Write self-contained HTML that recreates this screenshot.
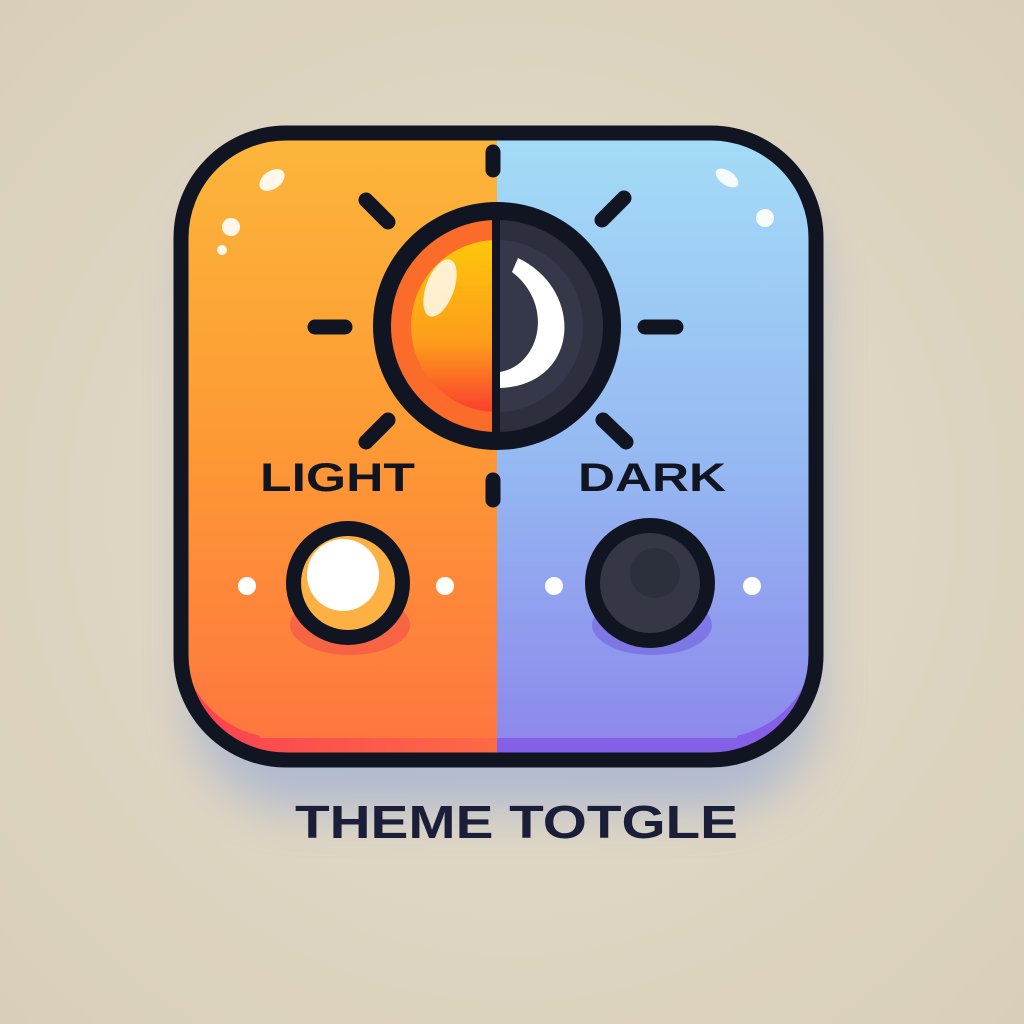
<!DOCTYPE html>
<html><head><style>html,body{margin:0;padding:0;background:#ddd3c1;}svg{display:block}</style></head>
<body>
<svg width="1024" height="1024" viewBox="0 0 1024 1024" xmlns="http://www.w3.org/2000/svg">
<defs>
<radialGradient id="bg" cx="50%" cy="50%" r="70%"><stop offset="0" stop-color="#e3dccd"/><stop offset="1" stop-color="#d9cfb9"/></radialGradient>
<linearGradient id="lg" x1="0" y1="0" x2="0" y2="1"><stop offset="0" stop-color="#fcb63a"/><stop offset="0.5" stop-color="#fd9a34"/><stop offset="1" stop-color="#fe7740"/></linearGradient>
<linearGradient id="rg" x1="0" y1="0" x2="0" y2="1"><stop offset="0" stop-color="#a4dcf7"/><stop offset="0.55" stop-color="#95b8f2"/><stop offset="1" stop-color="#8d89ec"/></linearGradient>
<linearGradient id="ll" x1="0" y1="0" x2="1" y2="0"><stop offset="0" stop-color="#fb3f52"/><stop offset="1" stop-color="#fc6a45"/></linearGradient>
<linearGradient id="kl" x1="0" y1="0" x2="0" y2="1"><stop offset="0" stop-color="#ffc60a"/><stop offset="0.6" stop-color="#fd9c1c"/><stop offset="1" stop-color="#fa3f2e"/></linearGradient>
<filter id="sh" x="-30%" y="-30%" width="160%" height="160%"><feGaussianBlur stdDeviation="22"/></filter>
<clipPath id="box"><rect x="181" y="133" width="635" height="627" rx="105"/></clipPath>
</defs>
<rect width="1024" height="1024" fill="url(#bg)"/>
<rect x="190" y="170" width="630" height="640" rx="110" fill="#8ea4d8" opacity="0.55" filter="url(#sh)"/>
<g clip-path="url(#box)">
<rect x="170" y="120" width="327" height="660" fill="url(#ll)"/>
<rect x="497" y="120" width="330" height="660" fill="#8360e6"/>
<rect x="181" y="133" width="316" height="605" rx="100" fill="url(#lg)"/>
<rect x="260" y="133" width="237" height="605" fill="url(#lg)"/>
<rect x="497" y="133" width="319" height="605" rx="100" fill="url(#rg)"/>
<rect x="497" y="133" width="240" height="605" fill="url(#rg)"/>
</g>
<rect x="181" y="133" width="635" height="627" rx="105" fill="none" stroke="#111522" stroke-width="15"/>
<ellipse cx="272" cy="180" rx="14" ry="9" fill="#fff" opacity="0.9" transform="rotate(-35 272 180)"/>
<circle cx="231" cy="227" r="9" fill="#fff" opacity="0.9"/>
<circle cx="222" cy="250" r="5" fill="#fff" opacity="0.9"/>
<ellipse cx="727" cy="178" rx="13" ry="7" fill="#fff" opacity="0.9" transform="rotate(35 727 178)"/>
<circle cx="765" cy="218" r="9" fill="#fff" opacity="0.9"/>
<g stroke="#111522" stroke-width="15" stroke-linecap="round">
<line x1="493" y1="152" x2="493" y2="170"/>
<line x1="493" y1="480" x2="493" y2="500"/>
<line x1="315" y1="327" x2="345" y2="327"/>
<line x1="645" y1="327" x2="676" y2="327"/>
<line x1="366" y1="200" x2="388" y2="222"/>
<line x1="624" y1="198" x2="602" y2="220"/>
<line x1="388" y1="420" x2="366" y2="442"/>
<line x1="603" y1="420" x2="626" y2="442"/>
</g>
<circle cx="497" cy="326" r="124" fill="#111522"/>
<path d="M497 220 A106 106 0 0 0 497 432 Z" fill="#fb6b2a"/>
<path d="M497 220 A106 106 0 0 1 497 432 Z" fill="#2d2f3f"/>
<path d="M497 240 A86 86 0 0 0 497 412 Z" fill="url(#kl)"/>
<path d="M497 240 A86 86 0 0 1 497 412 Z" fill="#353849"/>
<rect x="492" y="220" width="8" height="212" fill="#111522"/>
<ellipse cx="440" cy="288" rx="14" ry="30" fill="#fff" opacity="0.8" transform="rotate(20 440 288)"/>
<path d="M518 258 C 585 290, 580 385, 500 388 L 500 372 C 540 365, 555 305, 512 272 Z" fill="#fff"/>
<g font-family="Liberation Sans, sans-serif" font-weight="bold" fill="#111522">
<text x="260" y="491" font-size="40" textLength="155" lengthAdjust="spacingAndGlyphs">LIGHT</text>
<text x="578" y="491" font-size="40" textLength="148" lengthAdjust="spacingAndGlyphs">DARK</text>
<text x="295" y="838" font-size="46" fill="#1a1e38" textLength="443" lengthAdjust="spacingAndGlyphs">THEME TOTGLE</text>
</g>
<ellipse cx="350" cy="625" rx="60" ry="30" fill="#f0504a" opacity="0.6"/>
<circle cx="348" cy="583" r="62" fill="#111522"/>
<circle cx="348" cy="583" r="47" fill="#fdb043"/>
<circle cx="343" cy="575" r="36" fill="#fff"/>
<ellipse cx="652" cy="625" rx="60" ry="30" fill="#7260e0" opacity="0.6"/>
<circle cx="650" cy="583" r="65" fill="#111522"/>
<circle cx="650" cy="583" r="50" fill="#353746"/>
<circle cx="655" cy="573" r="25" fill="#2b2d3a" opacity="0.8"/>
<g fill="#fff"><circle cx="247" cy="586" r="9"/><circle cx="445" cy="586" r="9"/><circle cx="554" cy="586" r="9"/><circle cx="752" cy="586" r="9"/></g>
</svg>
</body></html>
